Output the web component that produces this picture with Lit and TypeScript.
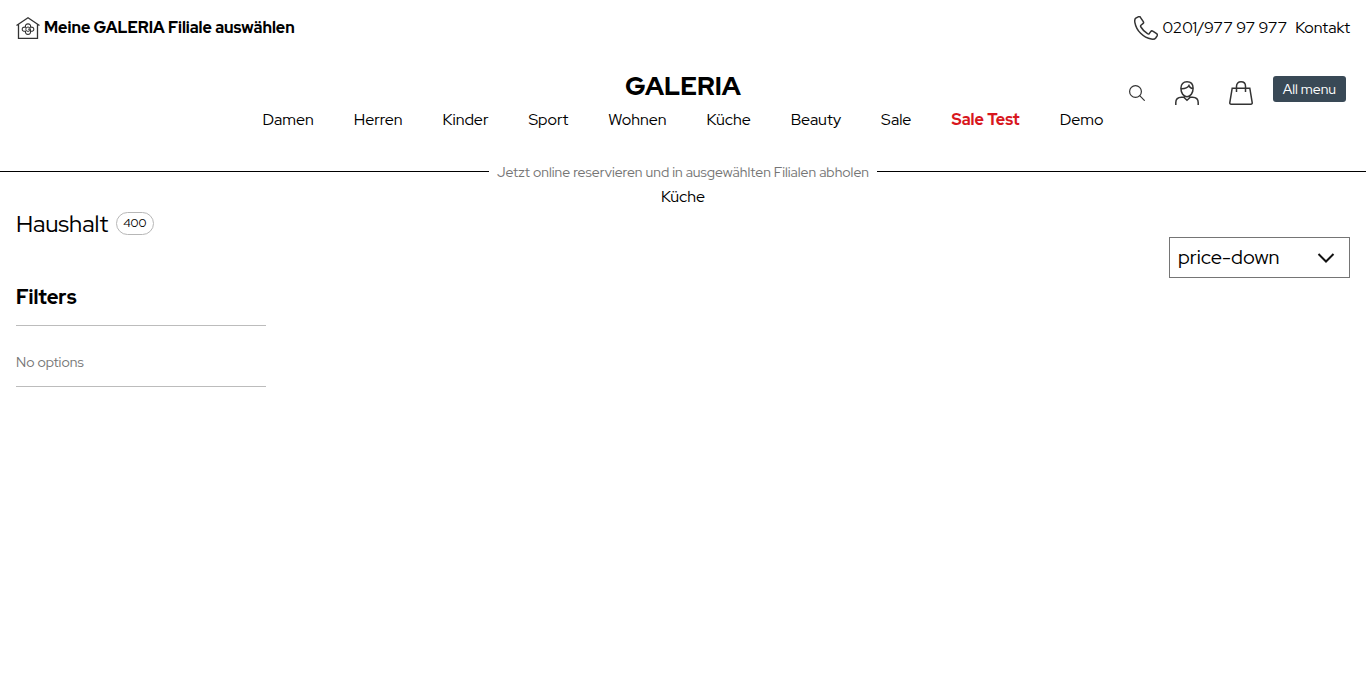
import { LitElement, html, css } from "lit";
import { customElement } from "lit/decorators.js";
import { classMap } from "lit/directives/class-map.js";

@customElement("app-root")
export class AppRoot extends LitElement {
  static styles = css`
    :host {
      display: block;
      font-family: "Red Hat Display", "Red Hat Text", "Inter", "Liberation Sans", sans-serif;
      font-size: 16px;
      line-height: 24px;
      font-variant-numeric: proportional-nums;
      color: #000;
      background: #fff;
    }
    * { box-sizing: border-box; }
    a { color: inherit; text-decoration: none; white-space: nowrap; }
    h1, h2, p { margin: 0; font-weight: 400; }
    svg { display: block; flex: none; fill: none; stroke: #333; stroke-width: 1.5; }
    button { font: inherit; padding: 0; border: 0; background: none; cursor: pointer; }
    .top { display: flex; justify-content: space-between; align-items: center; height: 56px; padding: 0 16px; }
    .top a, .contact { display: flex; align-items: center; gap: 4px; }
    .top .contact { gap: 8px; }
    .top .store { font-weight: 800; }
    .main { display: grid; grid-template-columns: 1fr auto 1fr; padding: 16px 20px 0; height: 96px; }
    .brand { display: flex; flex-direction: column; align-items: center; grid-column: 2; }
    .logo { font-size: 26px; line-height: 28px; font-weight: 800; }
    .nav { display: flex; gap: 40px; padding-top: 8px; }
    .sale { color: #d8171e; font-weight: 800; }
    .tools { display: flex; justify-content: flex-end; align-items: flex-start; padding-top: 4px; }
    .icons { display: flex; align-items: center; padding-top: 5px; }
    .icons button { padding-right: 30px; }
    .icons button:last-child { padding-right: 20px; }
    .menu { background: #394956; color: #fff; border-radius: 3px; font-size: 14px; line-height: 26px; padding: 0 10px; white-space: nowrap; }
    .claim { display: flex; align-items: center; gap: 8px; font-size: 14px; line-height: 24px; color: #757575; padding: 8px 0 1px; }
    .claim::before, .claim::after { content: ""; flex: 1; height: 2px; border-top: 1px solid #000; }
    .crumb { text-align: center; }
    .content { padding: 0 16px; }
    .title { display: flex; align-items: flex-start; gap: 8px; height: 28px; padding-top: 1px; }
    h1 { font-size: 24px; line-height: 28px; }
    .count { margin-top: 2px; border: 1px solid #b7b7b7; border-radius: 12px; font-size: 12px; line-height: 21px; padding: 0 6px; }
    .sort { display: flex; justify-content: flex-end; }
    .field { display: grid; width: 181px; align-items: center; }
    .field > * { grid-area: 1 / 1; }
    .field svg { justify-self: end; margin-right: 15px; pointer-events: none; stroke: #111; stroke-width: 2; }
    select { appearance: none; width: 100%; height: 41px; margin: 0; padding: 0 40px 2px 8px; border: 1px solid #757575; border-radius: 0; background: #fff; color: #000; font: inherit; font-size: 20px; }
    .filters { width: 250px; }
    h2 { font-size: 20px; line-height: 24px; font-weight: 800; padding: 7px 0 16px; border-bottom: 1px solid #bcbcbc; }
    .empty { font-size: 14px; line-height: 24px; color: #757575; padding: 24px 0 12px; border-bottom: 1px solid #bcbcbc; }
  `;

  private categories = ["Damen", "Herren", "Kinder", "Sport", "Wohnen", "Küche", "Beauty", "Sale", "Sale Test", "Demo"];

  render() {
    return html`
      <div class="top">
        <a class="store" href="#">
          <svg width="24" height="24" viewBox="0 0 24 24">
            <path stroke-width="1.3" d="M.5 9.500 12 1.700l11.500 7.800M2.500 8.500v13.800h19V8.500" />
            <path stroke-width="1.1" d="M9.500 11.200C8.500 6.800 15.500 6.800 14.500 11.200C18.900 10.200 18.900 16.200 14.500 15.200C15.500 19.400 8.500 19.400 9.500 15.200C5.100 16.200 5.100 10.200 9.500 11.200Z" />
            <circle stroke-width="1" cx="12" cy="13.200" r="2.200" /><path stroke-width="1" d="M12 13.200h2.500v2.200" />
          </svg>
          Meine GALERIA Filiale auswählen
        </a>
        <div class="contact">
          <a href="tel:020197797977">
            <svg width="24" height="24" viewBox="0 0 24 24">
              <path d="M4.200.8 1.800 2.200C.6 3.100.6 5 .9 6.600c1.500 8.100 8.300 15 16.500 16.500 1.600.3 3.400.1 4.300-1.100l1.400-2.200c.4-.8.2-1.600-.5-2.100l-3.800-2.500c-.7-.5-1.600-.3-2.100.4l-1.300 1.800c-.5.6-1.200.8-1.900.3A19 19 0 0 1 6.900 11c-.5-.7-.3-1.500.3-2l1.700-1.300c.7-.5.800-1.400.4-2L6.400 1.300c-.5-.7-1.400-.9-2.200-.5Z" />
            </svg>
            0201/977 97 977
          </a>
          <a href="#">Kontakt</a>
        </div>
      </div>
      <header class="main">
        <div class="brand">
          <a class="logo" href="#">GALERIA</a>
          <nav class="nav">
            ${this.categories.map((c) => html`<a href="#" class=${classMap({ sale: c === "Sale Test" })}>${c}</a>`)}
          </nav>
        </div>
        <div class="tools">
          <div class="icons">
            <button aria-label="Suche">
              <svg width="16" height="16" viewBox="0 0 16 16"><circle cx="6.500" cy="6.500" r="5.900" stroke-width="1.200" /><path stroke-width="1.200" d="m10.700 10.700 5 5" /></svg>
            </button>
            <button aria-label="Konto">
              <svg width="24" height="24" viewBox="0 0 24 24">
                <path d="M5.900 7.300C5.900 3 8.300.8 12 .8s6.100 2.200 6.100 6.500c0 4.600-2.600 8.400-6.100 8.400s-6.100-3.800-6.100-8.400ZM6 7.700c4 .2 6.500-.8 7.900-3.100.6 1.700 1.900 2.800 4.100 3.100M.8 24v-2.500c0-3.300 2.200-5.300 5.700-5.300h2.200l3.300 3 3.300-3h2.200c3.500 0 5.700 2 5.700 5.300V24" />
              </svg>
            </button>
            <button aria-label="Warenkorb">
              <svg width="24" height="24" viewBox="0 0 24 24">
                <path d="M3.200 7.200h17.600l2.400 14.500c.1.900-.4 1.500-1.300 1.500H2.100c-.9 0-1.400-.6-1.300-1.500L3.200 7.200ZM7.500 11V5.300C7.500 2.500 9.300.8 12 .8s4.500 1.700 4.500 4.500V11" />
              </svg>
            </button>
          </div>
          <button class="menu">All menu</button>
        </div>
      </header>
      <p class="claim">Jetzt online reservieren und in ausgewählten Filialen abholen</p>
      <p class="crumb">Küche</p>
      <main class="content">
        <div class="title"><h1>Haushalt</h1><span class="count">400</span></div>
        <div class="sort">
          <div class="field">
            <select aria-label="Sortierung"><option>price-down</option></select>
            <svg width="18" height="10" viewBox="0 0 18 10"><path d="m1.500 1 7.500 7.500L16.500 1" /></svg>
          </div>
        </div>
        <aside class="filters">
          <h2>Filters</h2>
          <p class="empty">No options</p>
        </aside>
      </main>
    `;
  }
}
